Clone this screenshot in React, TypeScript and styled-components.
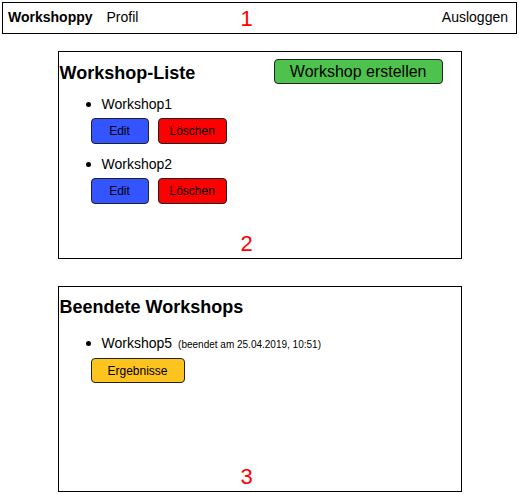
import React from "react";
import styled, { createGlobalStyle } from "styled-components";

const GlobalStyle = createGlobalStyle`
  * {
    box-sizing: border-box;
  }

  body {
    margin: 0;
    background: #fff;
    color: #000;
    font-family: "Liberation Sans", Arial, sans-serif;
  }
`;

type Workshop = { id: number; name: string; endedAt?: string };

const openWorkshops: Workshop[] = [
  { id: 1, name: "Workshop1" },
  { id: 2, name: "Workshop2" },
];

const endedWorkshops: Workshop[] = [
  { id: 5, name: "Workshop5", endedAt: "25.04.2019, 10:51" },
];

const App = () => {
  return (
    <>
      <GlobalStyle />
      <NavBar>
        <Brand>Workshoppy</Brand>
        <NavLink>Profil</NavLink>
        <Spacer />
        <NavLink>Ausloggen</NavLink>
        <Marker>1</Marker>
      </NavBar>

      <Panel $height={208} $gap={17}>
        <PanelHeader>
          <Title>Workshop-Liste</Title>
          <Button $variant="create">Workshop erstellen</Button>
        </PanelHeader>
        <List $top={11}>
          {openWorkshops.map((w) => (
            <Item key={w.id}>
              <ItemName>{w.name}</ItemName>
              <ButtonRow>
                <Button $variant="edit">Edit</Button>
                <Button $variant="delete">Löschen</Button>
              </ButtonRow>
            </Item>
          ))}
        </List>
        <Marker>2</Marker>
      </Panel>

      <Panel $height={206} $gap={27}>
        <Title $top={10}>Beendete Workshops</Title>
        <List $top={17}>
          {endedWorkshops.map((w) => (
            <Item key={w.id}>
              <ItemName>
                {w.name}
                <EndedNote>(beendet am {w.endedAt})</EndedNote>
              </ItemName>
              <ButtonRow>
                <Button $variant="results">Ergebnisse</Button>
              </ButtonRow>
            </Item>
          ))}
        </List>
        <Marker>3</Marker>
      </Panel>
    </>
  );
};

const NavBar = styled.nav`
  position: relative;
  display: flex;
  align-items: center;
  height: 32px;
  margin: 2px;
  padding: 0 8px 2px 5px;
  border: 1px solid #000;
  font-size: 14px;
`;

const Brand = styled.span`
  font-weight: 700;
`;

const NavLink = styled.span`
  margin-left: 14px;
  cursor: pointer;
`;

const Spacer = styled.div`
  flex: 1;
`;

const Marker = styled.span`
  position: absolute;
  left: 50%;
  bottom: 3px;
  margin-left: -19px;
  font-size: 22px;
  line-height: 22px;
  color: #ff0000;
`;

const Panel = styled.section<{ $height: number; $gap: number }>`
  position: relative;
  width: 404px;
  height: ${(p) => p.$height}px;
  margin: ${(p) => p.$gap}px auto 0;
  padding-left: 1px;
  border: 1px solid #000;
`;

const PanelHeader = styled.div`
  display: flex;
  justify-content: space-between;
  align-items: flex-end;
  padding: 7px 18px 0 0;
`;

const Title = styled.h2<{ $top?: number }>`
  margin: ${(p) => p.$top ?? 0}px 0 1px;
  font-size: 18px;
  line-height: 20px;
  font-weight: 700;
`;

const List = styled.ul<{ $top: number }>`
  margin: ${(p) => p.$top}px 0 0;
  padding-left: 42px;
`;

const Item = styled.li`
  margin-bottom: 11px;
`;

const ItemName = styled.div`
  font-size: 14px;
  line-height: 17px;
`;

const EndedNote = styled.span`
  margin-left: 6px;
  font-size: 10px;
`;

const ButtonRow = styled.div`
  display: flex;
  gap: 9px;
  margin: 5px 0 0 -11px;
`;

const variants = {
  create: { bg: "#4dc34d", size: 16, pad: 15, min: 0, h: 25 },
  edit: { bg: "#3454ff", size: 12, pad: 11, min: 58, h: 26 },
  delete: { bg: "#ff0000", size: 12, pad: 11, min: 58, h: 26 },
  results: { bg: "#fdc41f", size: 12, pad: 16, min: 0, h: 25 },
};

const Button = styled.button<{ $variant: keyof typeof variants }>`
  height: ${(p) => variants[p.$variant].h}px;
  min-width: ${(p) => variants[p.$variant].min}px;
  padding: 0 ${(p) => variants[p.$variant].pad}px;
  border: 1px solid #222;
  border-radius: 4px;
  background: ${(p) => variants[p.$variant].bg};
  color: #000;
  font-family: inherit;
  font-size: ${(p) => variants[p.$variant].size}px;
  cursor: pointer;
`;

export default App;
